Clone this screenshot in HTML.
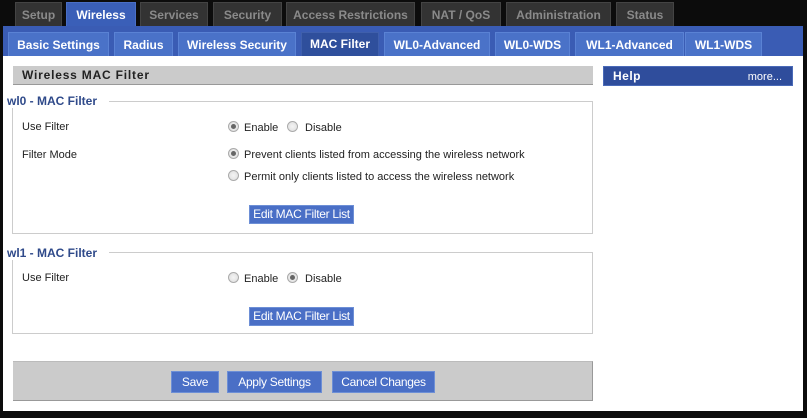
<!DOCTYPE html>
<html><head><style>
*{margin:0;padding:0;box-sizing:border-box}
body{width:807px;height:418px;background:#0c0c0c;position:relative;overflow:hidden;font-family:"Liberation Sans",sans-serif;font-size:11px;color:#222}
.a{position:absolute}
.tt{position:absolute;top:2px;height:24px;background:#333;border:1px solid #444;border-bottom:none;color:#8a8a8a;font-weight:bold;font-size:12px;text-align:center;line-height:25px}
.st{position:absolute;top:32px;height:24px;background:#4a72c8;border:1px solid #5a82d4;border-bottom:none;color:#fff;font-weight:bold;font-size:12px;text-align:center;line-height:24px}
.btn{position:absolute;background:#4a6fc6;color:#fff;font-size:12px;text-align:center;border:1px solid #6d8fd6;letter-spacing:-0.3px}
.rad{position:absolute;width:11px;height:11px;border-radius:50%;border:1px solid #aaa;background:radial-gradient(circle,#f4f4f4,#dcdcdc)}
.rad.on::after{content:"";position:absolute;left:2px;top:2px;width:5px;height:5px;border-radius:50%;background:#666}
.lg{position:absolute;color:#2f4a8a;font-weight:bold;font-size:12px;background:#fff;padding-right:12px}
.fs{position:absolute;border:1px solid #ccc}
</style></head><body>
<div class="tt" style="left:15px;width:47px">Setup</div>
<div class="tt" style="left:66px;width:70px;height:26px;background:#3a5fb8;border-color:#4a6fc6;color:#fff">Wireless</div>
<div class="tt" style="left:140px;width:68px">Services</div>
<div class="tt" style="left:213px;width:69px">Security</div>
<div class="tt" style="left:286px;width:129px">Access Restrictions</div>
<div class="tt" style="left:421px;width:80px">NAT / QoS</div>
<div class="tt" style="left:506px;width:105px">Administration</div>
<div class="tt" style="left:616px;width:58px">Status</div>
<div class="a" style="left:3px;top:26px;width:800px;height:30px;background:#3a5cb4"></div>
<div class="st" style="left:8px;width:101px">Basic Settings</div>
<div class="st" style="left:114px;width:59px">Radius</div>
<div class="st" style="left:178px;width:118px">Wireless Security</div>
<div class="st" style="left:301px;width:78px;background:#2f4f9c;border-color:#3f5fac;line-height:22px">MAC Filter</div>
<div class="st" style="left:384px;width:106px">WL0-Advanced</div>
<div class="st" style="left:495px;width:75px">WL0-WDS</div>
<div class="st" style="left:575px;width:109px">WL1-Advanced</div>
<div class="st" style="left:685px;width:77px">WL1-WDS</div>
<div class="a" style="left:3px;top:56px;width:800px;height:355px;background:#fff"></div>
<div class="a" style="left:13px;top:66px;width:580px;height:19px;background:#cbcbcb;border-bottom:1px solid #999;font-weight:bold;font-size:12px;letter-spacing:0.8px;padding-left:9px;line-height:18px">Wireless MAC Filter</div>
<div class="a" style="left:603px;top:66px;width:190px;height:20px;background:#2f4d9c;color:#fff;border:1px solid #4a6ab8"><b style="position:absolute;left:9px;top:2px;font-size:12px;letter-spacing:0.5px">Help</b><span style="position:absolute;right:10px;top:4px;font-size:11px">more...</span></div>

<div class="fs" style="left:12px;top:101px;width:581px;height:133px"></div>
<div class="lg" style="left:7px;top:94px">wl0 - MAC Filter</div>
<div class="a" style="left:22px;top:121px">Use Filter</div>
<div class="rad on" style="left:228px;top:121px"></div><div class="a" style="left:244px;top:122px">Enable</div>
<div class="rad" style="left:287px;top:121px"></div><div class="a" style="left:305px;top:122px">Disable</div>
<div class="a" style="left:22px;top:149px">Filter Mode</div>
<div class="rad on" style="left:228px;top:148px"></div><div class="a" style="left:244px;top:149px">Prevent clients listed from accessing the wireless network</div>
<div class="rad" style="left:228px;top:170px"></div><div class="a" style="left:244px;top:171px">Permit only clients listed to access the wireless network</div>
<div class="btn" style="left:249px;top:205px;width:105px;height:19px;line-height:17px">Edit MAC Filter List</div>

<div class="fs" style="left:12px;top:252px;width:581px;height:82px"></div>
<div class="lg" style="left:7px;top:246px">wl1 - MAC Filter</div>
<div class="a" style="left:22px;top:272px">Use Filter</div>
<div class="rad" style="left:228px;top:272px"></div><div class="a" style="left:244px;top:273px">Enable</div>
<div class="rad on" style="left:287px;top:272px"></div><div class="a" style="left:305px;top:273px">Disable</div>
<div class="btn" style="left:249px;top:307px;width:105px;height:19px;line-height:17px">Edit MAC Filter List</div>

<div class="a" style="left:13px;top:361px;width:580px;height:40px;background:#cbcbcb;border-top:1px solid #bbb;border-bottom:1px solid #999;border-right:1px solid #999"></div>
<div class="btn" style="left:171px;top:371px;width:48px;height:22px;line-height:20px">Save</div>
<div class="btn" style="left:227px;top:371px;width:95px;height:22px;line-height:20px">Apply Settings</div>
<div class="btn" style="left:332px;top:371px;width:103px;height:22px;line-height:20px">Cancel Changes</div>
</body></html>
